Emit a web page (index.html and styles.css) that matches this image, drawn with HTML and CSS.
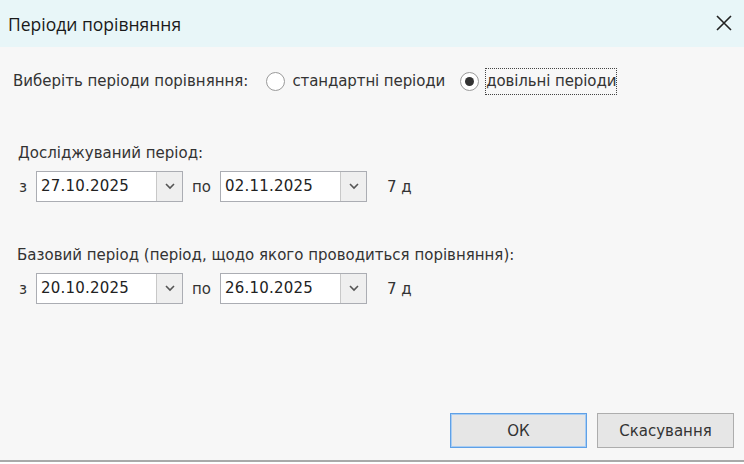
FILE: index.html
```html
<!DOCTYPE html>
<html>
<head>
<meta charset="utf-8">
<link rel="stylesheet" href="styles.css">
</head>
<body>

<div class="dialog">
	<div class="titlebar">
		<span class="title">Періоди порівняння</span>
		<span class="close">
			<svg width="16" height="16" viewBox="0 0 16 16"><path d="M1 1 L15 15 M15 1 L1 15" stroke="#222" stroke-width="1.6" fill="none"/></svg>
		</span>
	</div>

	<div class="content">
		<div class="choose">
			<span class="choose-label">Виберіть періоди порівняння:</span>
			<label class="radio"><span class="dot"></span>стандартні періоди</label>
			<label class="radio on"><span class="dot"></span><span class="focus">довільні періоди</span></label>
		</div>

		<div class="section first">
			<div class="sec-label">Досліджуваний період:</div>
			<div class="range">
				<span class="pre">з</span>
				<div class="datebox"><span class="val">27.10.2025</span><span class="drop"><svg width="10" height="7" viewBox="0 0 10 7"><path d="M1 1 L5 5 L9 1" stroke="#555" stroke-width="1.6" fill="none"/></svg></span></div>
				<span class="mid">по</span>
				<div class="datebox"><span class="val">02.11.2025</span><span class="drop"><svg width="10" height="7" viewBox="0 0 10 7"><path d="M1 1 L5 5 L9 1" stroke="#555" stroke-width="1.6" fill="none"/></svg></span></div>
				<span class="days">7 д</span>
			</div>
		</div>

		<div class="section second">
			<div class="sec-label">Базовий період (період, щодо якого проводиться порівняння):</div>
			<div class="range">
				<span class="pre">з</span>
				<div class="datebox"><span class="val">20.10.2025</span><span class="drop"><svg width="10" height="7" viewBox="0 0 10 7"><path d="M1 1 L5 5 L9 1" stroke="#555" stroke-width="1.6" fill="none"/></svg></span></div>
				<span class="mid">по</span>
				<div class="datebox"><span class="val">26.10.2025</span><span class="drop"><svg width="10" height="7" viewBox="0 0 10 7"><path d="M1 1 L5 5 L9 1" stroke="#555" stroke-width="1.6" fill="none"/></svg></span></div>
				<span class="days">7 д</span>
			</div>
		</div>
	</div>

	<div class="buttons">
		<button class="btn default">ОК</button>
		<button class="btn">Скасування</button>
	</div>
</div>

</body>
</html>
```

FILE: styles.css
```css
* {
  box-sizing: border-box;
}

body {
  margin: 0;
  background: #fff;
}

/* the whole window */
.dialog {
  width: 744px;
  height: 462px;
  background: #f7f7f7;
  display: flex;
  flex-direction: column;
  border-bottom: 2px solid #a9a9a9;
  font-family: "DejaVu Sans", sans-serif;
  font-size: 15px;
  color: #333;
}

/* title bar */
.titlebar {
  height: 47px;
  flex: none;
  background: #e8f6f8;
  display: flex;
  align-items: center;
  justify-content: space-between;
  padding: 0 12px 0 8px;
}

.title {
  font-family: "Open Sans", sans-serif;
  font-size: 17.5px;
  color: #1a1a1a;
}

.close {
  display: flex;
  padding-bottom: 2px;
}

.content {
  flex: 1;
  padding: 0 13px;
}

/* radio line */
.choose {
  display: flex;
  align-items: center;
  margin-top: 20px;
  height: 28px;
  white-space: nowrap;
}

.choose-label {
  margin-right: 18px;
}

.radio {
  display: flex;
  align-items: center;
  margin-right: 15px;
  letter-spacing: -0.1px;
}

.dot {
  width: 19px;
  height: 19px;
  border-radius: 50%;
  border: 1px solid #9a9a9a;
  background: #fff;
  margin-right: 7px;
  position: relative;
  flex: none;
}

.radio.on .dot {
  margin-right: 6px;
}

.radio.on .dot::after {
  content: '';
  position: absolute;
  left: 4px;
  top: 4px;
  width: 9px;
  height: 9px;
  border-radius: 50%;
  background: #333;
}

.focus {
  border: 1px dotted #444;
  padding: 3px 0 4px 0;
}

/* date sections */
.section.first {
  margin-top: 50px;
}

.section.second {
  margin-top: 45px;
}

.sec-label {
  padding-left: 5px;
  height: 16px;
  line-height: 16px;
  white-space: nowrap;
}

.section.second .sec-label {
  padding-left: 4px;
}

.range {
  display: flex;
  align-items: center;
  margin-top: 10px;
  padding-left: 6px;
}

.pre {
  width: 17px;
}

.mid {
  width: 37px;
  text-align: center;
}

.days {
  margin-left: 20px;
}

.datebox {
  width: 147px;
  height: 31px;
  border: 1px solid #abadb3;
  background: #fff;
  display: flex;
}

.val {
  flex: 1;
  padding-left: 4px;
  line-height: 29px;
  font-size: 15px;
  letter-spacing: 0.2px;
  color: #222;
}

.drop {
  width: 26px;
  border-left: 1px solid #c8c8c8;
  background: #efefef;
  display: flex;
  align-items: center;
  justify-content: center;
}

/* bottom buttons */
.buttons {
  display: flex;
  justify-content: flex-end;
  gap: 10px;
  padding: 0 10px 12px 0;
}

.btn {
  width: 137px;
  height: 35px;
  background: #e6e6e6;
  border: 1px solid #adadad;
  font-family: "DejaVu Sans", sans-serif;
  font-size: 15px;
  color: #333;
}

.btn.default {
  border: 1px solid #5fa0e6;
  box-shadow: inset 0 0 0 1px #a8cdf3;
}
```
